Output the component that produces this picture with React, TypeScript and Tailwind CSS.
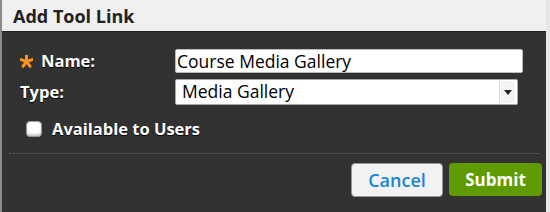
const font = { fontFamily: '"Open Sans", "Liberation Sans", sans-serif' };

const Asterisk = () => (
  <svg width="13" height="13" viewBox="-6.5 -6.5 13 13" className="shrink-0">
    {[0, 72, 144, 216, 288].map((a) => (
      <line
        key={a}
        x1="0"
        y1="0"
        x2="0"
        y2="-6"
        stroke="#f7931e"
        strokeWidth="3"
        strokeLinecap="round"
        transform={`rotate(${a})`}
      />
    ))}
  </svg>
);

const App = () => {
  return (
    <div className="w-[550px] h-[212px] bg-[#e6e6e6] overflow-hidden" style={font}>
      <div className="w-[546px] h-[212px] flex flex-col border-l-2 border-[#8a8a8a]">
        <div className="h-[32px] shrink-0 bg-[#f0f0f0] border-b border-[#1e1e1e] flex items-center pl-[11px]">
          <h3 className="text-[18px] font-bold text-[#222] leading-none">Add Tool Link</h3>
        </div>

        <div className="flex-1 bg-[#323232] flex flex-col pt-[17px]">
          <div className="flex items-center h-[24px]">
            <label className="w-[173px] pl-[18px] flex items-center gap-[8px] text-[16.5px] leading-none font-bold text-white [text-shadow:0_1px_1px_#000]">
              <Asterisk />
              Name:
            </label>
            <input
              className="w-[348px] h-[24px] bg-white rounded-[2px] border border-[#bbb] px-[1px] text-[17.5px] leading-none text-black outline-none"
              defaultValue="Course Media Gallery"
            />
          </div>

          <div className="flex items-center h-[26px] mt-[6px]">
            <label className="w-[173px] pl-[18px] text-[16.5px] leading-none font-bold text-white [text-shadow:0_1px_1px_#000]">
              Type:
            </label>
            <div className="w-[343px] h-[26px] bg-white rounded-[2px] border border-[#aaa] flex items-center justify-between pl-[6px] pr-[2px]">
              <span className="text-[17.5px] leading-none text-black">Media Gallery</span>
              <span className="w-[16px] h-[22px] flex items-center justify-center border-l border-[#ddd] bg-[#f4f4f4]">
                <svg width="8" height="5" viewBox="0 0 8 5">
                  <path d="M0 0 H8 L4 5 Z" fill="#222" />
                </svg>
              </span>
            </div>
          </div>

          <div className="flex items-center gap-[10px] pl-[24px] mt-[16px]">
            <span className="w-[16px] h-[16px] rounded-[4px] bg-white border border-[#999] shadow-[inset_0_-2px_2px_#ccc]" />
            <span className="text-[16.5px] leading-none font-bold text-white [text-shadow:0_1px_1px_#000]">
              Available to Users
            </span>
          </div>

          <div className="mx-[7px] mt-[15px] border-t border-dotted border-[#666]" />

          <div className="flex justify-end gap-[6px] pr-[4px] mt-[9px]">
            <button className="w-[92px] h-[34px] rounded-[4px] bg-[#f2f2f2] border border-[#999] text-[#1a86d0] text-[18px] leading-none font-semibold">
              Cancel
            </button>
            <button className="w-[93px] h-[33px] rounded-[4px] bg-[#5e9a00] text-white text-[17px] leading-none font-bold">
              Submit
            </button>
          </div>
        </div>
      </div>
    </div>
  );
};

export default App;
